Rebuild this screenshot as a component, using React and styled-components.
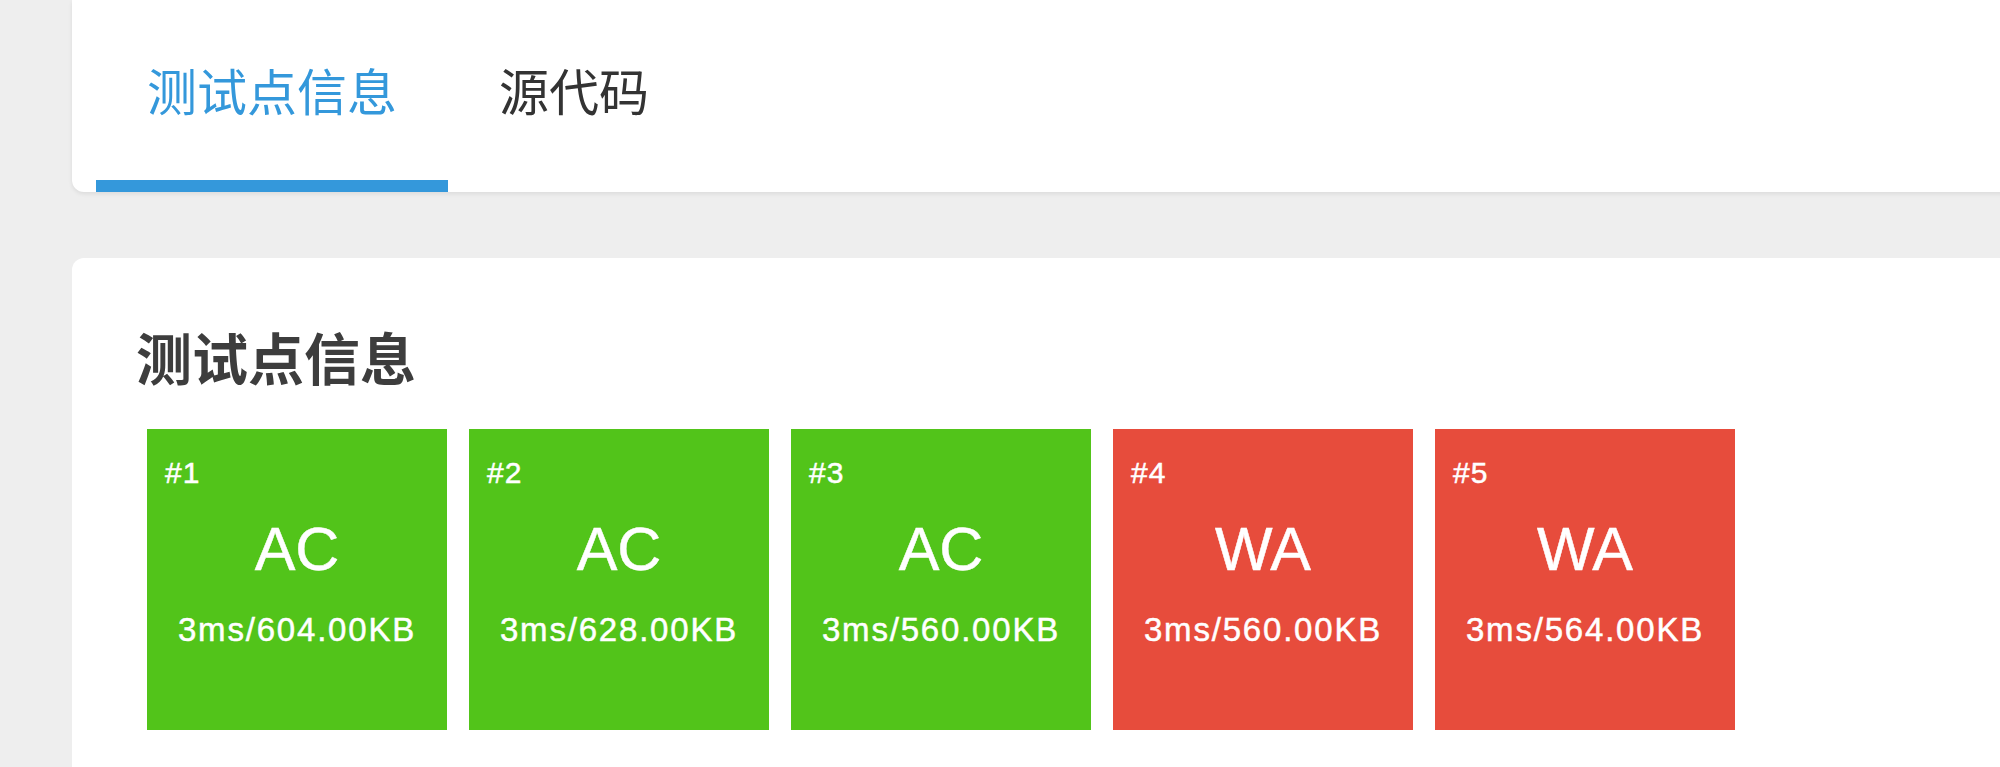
import React from "react";
import styled, { createGlobalStyle } from "styled-components";

const GlobalStyle = createGlobalStyle`
  html, body {
    margin: 0;
    padding: 0;
    background: #eeeeee;
    overflow: hidden;
  }
  body {
    font-family: "Liberation Sans", "Noto Sans CJK SC", sans-serif;
  }
`;

const cases = [
  { id: 1, status: "AC", time: 3, memory: "604.00" },
  { id: 2, status: "AC", time: 3, memory: "628.00" },
  { id: 3, status: "AC", time: 3, memory: "560.00" },
  { id: 4, status: "WA", time: 3, memory: "560.00" },
  { id: 5, status: "WA", time: 3, memory: "564.00" },
];

export default function App() {
  return (
    <Page>
      <GlobalStyle />
      <TabCard>
        <Tab active>测试点信息</Tab>
        <Tab>源代码</Tab>
      </TabCard>

      <InfoCard>
        <Heading>测试点信息</Heading>
        <Tiles>
          {cases.map((c) => (
            <Tile key={c.id} ok={c.status === "AC"}>
              <Label>#{c.id}</Label>
              <Status>{c.status}</Status>
              <Stats>
                {c.time}ms/{c.memory}KB
              </Stats>
            </Tile>
          ))}
        </Tiles>
      </InfoCard>
    </Page>
  );
}

const Page = styled.div`
  display: flex;
  flex-direction: column;
  gap: 66px;
  padding-left: 72px;
  width: 2100px;
  min-height: 767px;
`;

const TabCard = styled.div`
  display: flex;
  padding-left: 24px;
  background: #fff;
  border-radius: 0 0 12px 12px;
  box-shadow: 0 2px 4px rgba(0, 0, 0, 0.08);
`;

const Tab = styled.div`
  padding: 64px 51px 66px;
  font-family: "Noto Sans CJK SC", sans-serif;
  font-size: 50px;
  line-height: 50px;
  color: ${(p) => (p.active ? "#3498db" : "#333333")};
  border-bottom: 12px solid ${(p) => (p.active ? "#3498db" : "transparent")};
`;

const InfoCard = styled.div`
  background: #fff;
  border-radius: 12px 12px 0 0;
  padding: 70px 64px 80px;
  min-height: 600px;
`;

const Heading = styled.h2`
  margin: 0 0 34px;
  font-family: "Noto Sans CJK SC", sans-serif;
  font-size: 56px;
  line-height: 56px;
  font-weight: 700;
  color: #3d3d3d;
`;

const Tiles = styled.div`
  display: flex;
  flex-wrap: wrap;
`;

const Tile = styled.div`
  display: flex;
  flex-direction: column;
  box-sizing: border-box;
  width: 300px;
  height: 301px;
  margin: 11px;
  padding: 29px 0 0;
  background: ${(p) => (p.ok ? "#52c41a" : "#e74c3c")};
  color: #fff;
  -webkit-text-stroke: 0.5px #fff;
`;

const Label = styled.div`
  padding-left: 18px;
  font-size: 30px;
  line-height: 30px;
  letter-spacing: 1px;
`;

const Status = styled.div`
  margin-top: 31px;
  text-align: center;
  font-size: 61px;
  line-height: 60px;
`;

const Stats = styled.div`
  margin-top: 35px;
  text-align: center;
  font-size: 33px;
  line-height: 32px;
  letter-spacing: 1.8px;
`;
